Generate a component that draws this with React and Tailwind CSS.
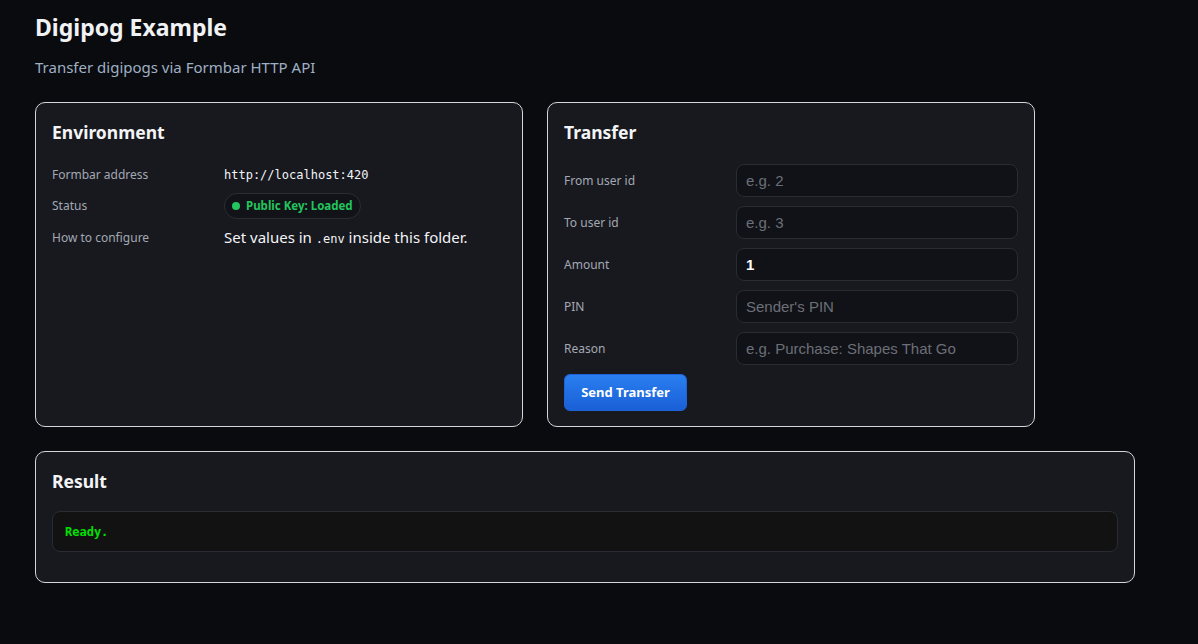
import React from "react";

const sans = { fontFamily: '"Noto Sans", "Open Sans", sans-serif' };

function Card({ title, children, className = "", headMb = "mb-[18px]" }) {
  return (
    <div className={"rounded-[10px] border border-[#d4d6db] bg-[#18191f] px-4 pt-[15px] " + className}>
      <h2 className={"text-[17.5px] leading-[28px] font-bold text-[#f3f4f6] " + headMb}>{title}</h2>
      {children}
    </div>
  );
}

function Field({ label, placeholder, value }) {
  return (
    <>
      <label className="text-[12px] text-[#a3a8b3]">{label}</label>
      <input
        defaultValue={value}
        placeholder={placeholder}
        className="h-[33px] w-full rounded-[8px] border border-[#2a2c33] bg-[#111217] px-[9px] text-[15px] font-bold text-white placeholder:font-normal placeholder:text-[#6b6f78] outline-none"
        style={{ fontFamily: '"Liberation Sans", Arial, sans-serif' }}
      />
    </>
  );
}

export default function App() {
  return (
    <div className="min-h-screen bg-[#0a0b0f] pl-[35px] pt-[11px]" style={sans}>
      <h1 className="text-[23px] leading-[32px] font-bold text-[#f1f2f4]">Digipog Example</h1>
      <p className="mt-[13px] text-[15px] leading-[22px] text-[#9fb0c4]">Transfer digipogs via Formbar HTTP API</p>

      <div className="mt-[24px] w-[1100px]">
        <div className="grid grid-cols-[488px_488px] gap-6">
          <Card title="Environment" className="pb-[15px]">
            <div className="grid grid-cols-[172px_1fr] items-center gap-y-2">
              <div className="text-[12px] leading-[19px] text-[#a3a8b3]">Formbar address</div>
              <div className="text-[12px] leading-[19px] text-[#f3f4f6] pt-[2px]" style={{ fontFamily: '"DejaVu Sans Mono", monospace' }}>
                http://localhost:420
              </div>
              <div className="text-[12px] leading-[20px] text-[#a3a8b3]">Status</div>
              <div className="flex">
                <span className="inline-flex h-[26px] items-center gap-[6px] rounded-full border border-[#2a2d35] bg-[#121318] px-[7px] text-[11.5px] leading-[16px] font-bold text-[#22c55e]">
                  <span className="h-[8px] w-[8px] rounded-full bg-[#22c55e]" />
                  Public Key: Loaded
                </span>
              </div>
              <div className="text-[12px] leading-[20px] text-[#a3a8b3]">How to configure</div>
              <div className="text-[15px] leading-[20px] text-[#f3f4f6]">
                Set values in{" "}
                <code className="text-[12px]" style={{ fontFamily: '"DejaVu Sans Mono", monospace' }}>.env</code>{" "}
                inside this folder.
              </div>
            </div>
          </Card>

          <Card title="Transfer" className="pb-[15px]">
            <div className="grid grid-cols-[172px_282px] items-center gap-y-[9px]">
              <Field label="From user id" placeholder="e.g. 2" />
              <Field label="To user id" placeholder="e.g. 3" />
              <Field label="Amount" value="1" />
              <Field label="PIN" placeholder="Sender's PIN" />
              <Field label="Reason" placeholder="e.g. Purchase: Shapes That Go" />
            </div>
            <button className="mt-[9px] h-[37px] w-[123px] rounded-[6px] border border-[#1e63d8] bg-gradient-to-b from-[#2a7ff0] to-[#1a5fd6] text-[13px] font-bold text-white">
              Send Transfer
            </button>
          </Card>
        </div>

        <Card title="Result" className="mt-6 pb-[30px]" headMb="mb-[16px]">
          <div className="flex h-[41px] items-center rounded-[8px] border border-[#2a2c33] bg-[#121212] px-[12px]">
            <span className="text-[12px] font-bold text-[#00e000]" style={{ fontFamily: '"DejaVu Sans Mono", monospace' }}>Ready.</span>
          </div>
        </Card>
      </div>
    </div>
  );
}
